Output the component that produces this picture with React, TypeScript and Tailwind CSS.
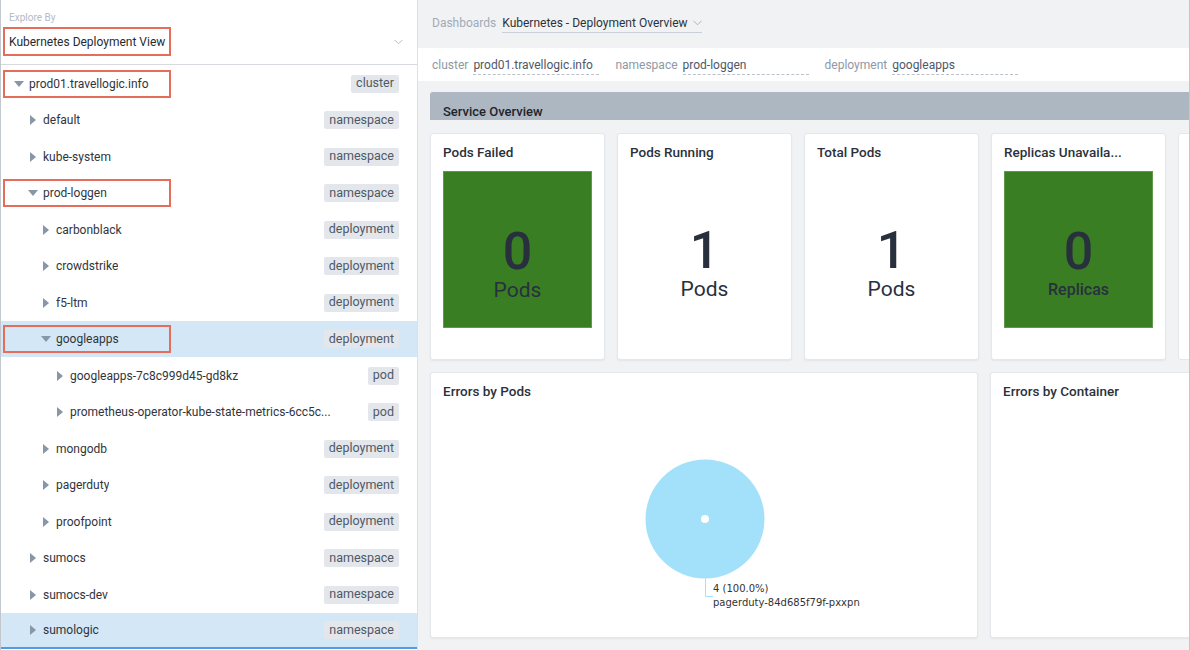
import clsx from "clsx";

type TreeRow = {
  label: string;
  level: number;
  badge: string;
  open?: boolean;
  boxed?: boolean;
  selected?: boolean;
};

const rows: TreeRow[] = [
  { label: "prod01.travellogic.info", level: 0, badge: "cluster", open: true, boxed: true },
  { label: "default", level: 1, badge: "namespace" },
  { label: "kube-system", level: 1, badge: "namespace" },
  { label: "prod-loggen", level: 1, badge: "namespace", open: true, boxed: true },
  { label: "carbonblack", level: 2, badge: "deployment" },
  { label: "crowdstrike", level: 2, badge: "deployment" },
  { label: "f5-ltm", level: 2, badge: "deployment" },
  { label: "googleapps", level: 2, badge: "deployment", open: true, boxed: true, selected: true },
  { label: "googleapps-7c8c999d45-gd8kz", level: 3, badge: "pod" },
  { label: "prometheus-operator-kube-state-metrics-6cc5c...", level: 3, badge: "pod" },
  { label: "mongodb", level: 2, badge: "deployment" },
  { label: "pagerduty", level: 2, badge: "deployment" },
  { label: "proofpoint", level: 2, badge: "deployment" },
  { label: "sumocs", level: 1, badge: "namespace" },
  { label: "sumocs-dev", level: 1, badge: "namespace" },
  { label: "sumologic", level: 1, badge: "namespace", selected: true },
];

// indentation per tree depth, measured from the red box's inner edge
const indent = ["pl-[4px]", "pl-[18px]", "pl-[31px]", "pl-[45px]"];

const Caret = ({ open }: { open?: boolean }) =>
  open ? (
    <svg width="10" height="6" viewBox="0 0 10 6">
      <path d="M0 0h10L5 6z" fill="#8896a8" />
    </svg>
  ) : (
    <svg width="6" height="10" viewBox="0 0 6 10">
      <path d="M0 0l6 5-6 5z" fill="#8896a8" />
    </svg>
  );

const Chevron = ({ color = "#b9c0c9" }: { color?: string }) => (
  <svg width="9" height="6" viewBox="0 0 9 6">
    <path d="M0.5 0.8l4 4 4-4" fill="none" stroke={color} strokeWidth="1" />
  </svg>
);

const Sidebar = () => (
  <div className="w-[418px] shrink-0 h-full bg-white border-l border-r border-l-[#c3c8ce] border-r-[#dde1e5] flex flex-col overflow-hidden">
    <div className="h-[65px] shrink-0 border-b border-[#d6dae0]">
      <div className="pl-[8px] pt-[12px] text-[10px] leading-[12px] text-[#b3bbc6]">
        Explore By
      </div>
      <div className="flex items-center mt-[3px]">
        <div className="ml-[2px] w-[168px] h-[29px] border-2 border-[#e56d5c] flex items-center pl-[4px] text-[12px] whitespace-nowrap text-[#262b33]">
          Kubernetes Deployment View
        </div>
        <div className="ml-auto mr-[14px]">
          <Chevron />
        </div>
      </div>
    </div>
    {rows.map((row, i) => (
      <div
        key={row.label}
        className={clsx(
          "h-[36.5px] shrink-0 flex items-center pr-[18px] pt-[1px]",
          row.selected && "bg-[#d4e7f6]",
          i === rows.length - 1 && "border-b-2 border-[#4a9fe2]"
        )}
      >
        <div
          className={clsx(
            "ml-[2px] min-w-[168px] max-w-[340px] h-[28px] border-2 flex items-center",
            row.boxed ? "border-[#e56d5c]" : "border-transparent",
            indent[row.level]
          )}
        >
          <span className="w-[20px] shrink-0 flex justify-center">
            <Caret open={row.open} />
          </span>
          <span className="text-[12px] text-[#30353d] whitespace-nowrap truncate">
            {row.label}
          </span>
        </div>
        <span className="ml-auto h-[18px] px-[5px] flex items-center rounded-[2px] bg-[#e3e7eb] text-[12.5px] text-[#4f5966]">
          {row.badge}
        </span>
      </div>
    ))}
  </div>
);

const FilterItem = ({ label, value }: { label: string; value: string }) => (
  <div className="flex items-end gap-[5px]">
    <span className="text-[#8e98a6] leading-[18px] pb-[1px]">{label}</span>
    <span className="w-[126px] border-b border-dashed border-[#b9c1cb] leading-[18px] pt-[1px] text-[#4d5869]">
      {value}
    </span>
  </div>
);

type StatProps = {
  title: string;
  value: string;
  unit: string;
  green?: boolean;
  smallUnit?: boolean;
};

const StatCard = ({ title, value, unit, green, smallUnit }: StatProps) => (
  <div className="w-[175px] shrink-0 h-[227px] bg-white rounded-[3px] border border-[#e4e7eb] shadow-[0_1px_2px_rgba(0,0,0,0.06)] pt-[9px] px-[12px]">
    <div className="text-[13.5px] leading-[18px] font-medium text-[#2b313b] whitespace-nowrap">
      {title}
    </div>
    <div
      className={clsx(
        "mt-[10px] w-[149px] h-[157px] flex flex-col items-center pt-[54px] text-[#28303d]",
        green && "bg-[#3a7e24] border border-[#5e9a4a]"
      )}
    >
      <span className="text-[52px] leading-[52px] font-medium">{value}</span>
      {smallUnit ? (
        <span className="text-[16px] leading-[16px] mt-[4px] font-medium">{unit}</span>
      ) : (
        <span className="text-[21px] leading-[21px] mt-[2px]">{unit}</span>
      )}
    </div>
  </div>
);

const PieChart = () => (
  <svg width="548" height="236" viewBox="0 0 548 236">
    <circle cx="274" cy="118" r="59.5" fill="#a3e1fb" />
    <circle cx="274" cy="118" r="4" fill="#ffffff" />
    <path d="M274.5 177.5V195.5H282" fill="none" stroke="#a3e1fb" strokeWidth="1" />
    <text x="282" y="190.5" fontSize="10" fill="#333" fontFamily="'DejaVu Sans', sans-serif">
      4 (100.0%)
    </text>
    <text x="282" y="204.5" fontSize="10" fill="#333" fontFamily="'DejaVu Sans', sans-serif">
      pagerduty-84d685f79f-pxxpn
    </text>
  </svg>
);

const Dashboard = () => (
  <div className="flex-1 min-w-0 h-full bg-[#f1f2f4] border-r border-[#c3c8ce] flex flex-col overflow-hidden">
    <div className="h-[48px] shrink-0 pl-[14px] pt-[15px] flex items-start text-[12px] leading-[16px]">
      <span className="text-[#a1abb8]">Dashboards</span>
      <span className="ml-[6px] flex items-center gap-[5px] border-b border-[#c9d0d8] pb-[1px] text-[#2c323b]">
        Kubernetes - Deployment Overview
        <Chevron color="#aab3be" />
      </span>
    </div>
    <div className="h-[33px] shrink-0 bg-white flex items-center pl-[14px] gap-[16px] text-[12px]">
      <FilterItem label="cluster" value="prod01.travellogic.info" />
      <FilterItem label="namespace" value="prod-loggen" />
      <FilterItem label="deployment" value="googleapps" />
    </div>
    <div className="px-[12px] pt-[11px] flex flex-col">
      <div className="h-[28px] -mr-[12px] bg-[#adb7c1] rounded-tl-[3px] pl-[13px] pt-[13px] text-[13px] leading-[14px] font-medium text-[#1e242c]">
        Service Overview
      </div>
      <div className="mt-[13px] flex gap-[12px]">
        <StatCard title="Pods Failed" value="0" unit="Pods" green />
        <StatCard title="Pods Running" value="1" unit="Pods" />
        <StatCard title="Total Pods" value="1" unit="Pods" />
        <StatCard title="Replicas Unavaila..." value="0" unit="Replicas" green smallUnit />
        <div className="w-[175px] shrink-0 h-[227px] bg-white rounded-[3px] border border-[#e4e7eb]" />
      </div>
      <div className="mt-[12px] flex gap-[12px]">
        <div className="w-[548px] shrink-0 h-[266px] bg-white rounded-[3px] border border-[#e4e7eb] shadow-[0_1px_2px_rgba(0,0,0,0.06)]">
          <div className="pt-[9px] pl-[12px] text-[13.5px] leading-[18px] font-medium text-[#2b313b]">
            Errors by Pods
          </div>
          <div className="mt-[1px]">
            <PieChart />
          </div>
        </div>
        <div className="w-[548px] shrink-0 h-[266px] bg-white rounded-[3px] border border-[#e4e7eb] shadow-[0_1px_2px_rgba(0,0,0,0.06)]">
          <div className="pt-[9px] pl-[12px] text-[13.5px] leading-[18px] font-medium text-[#2b313b]">
            Errors by Container
          </div>
        </div>
      </div>
    </div>
  </div>
);

export default function App() {
  return (
    <div className="w-[1190px] h-[650px] flex font-['Roboto',sans-serif] overflow-hidden">
      <Sidebar />
      <Dashboard />
    </div>
  );
}
